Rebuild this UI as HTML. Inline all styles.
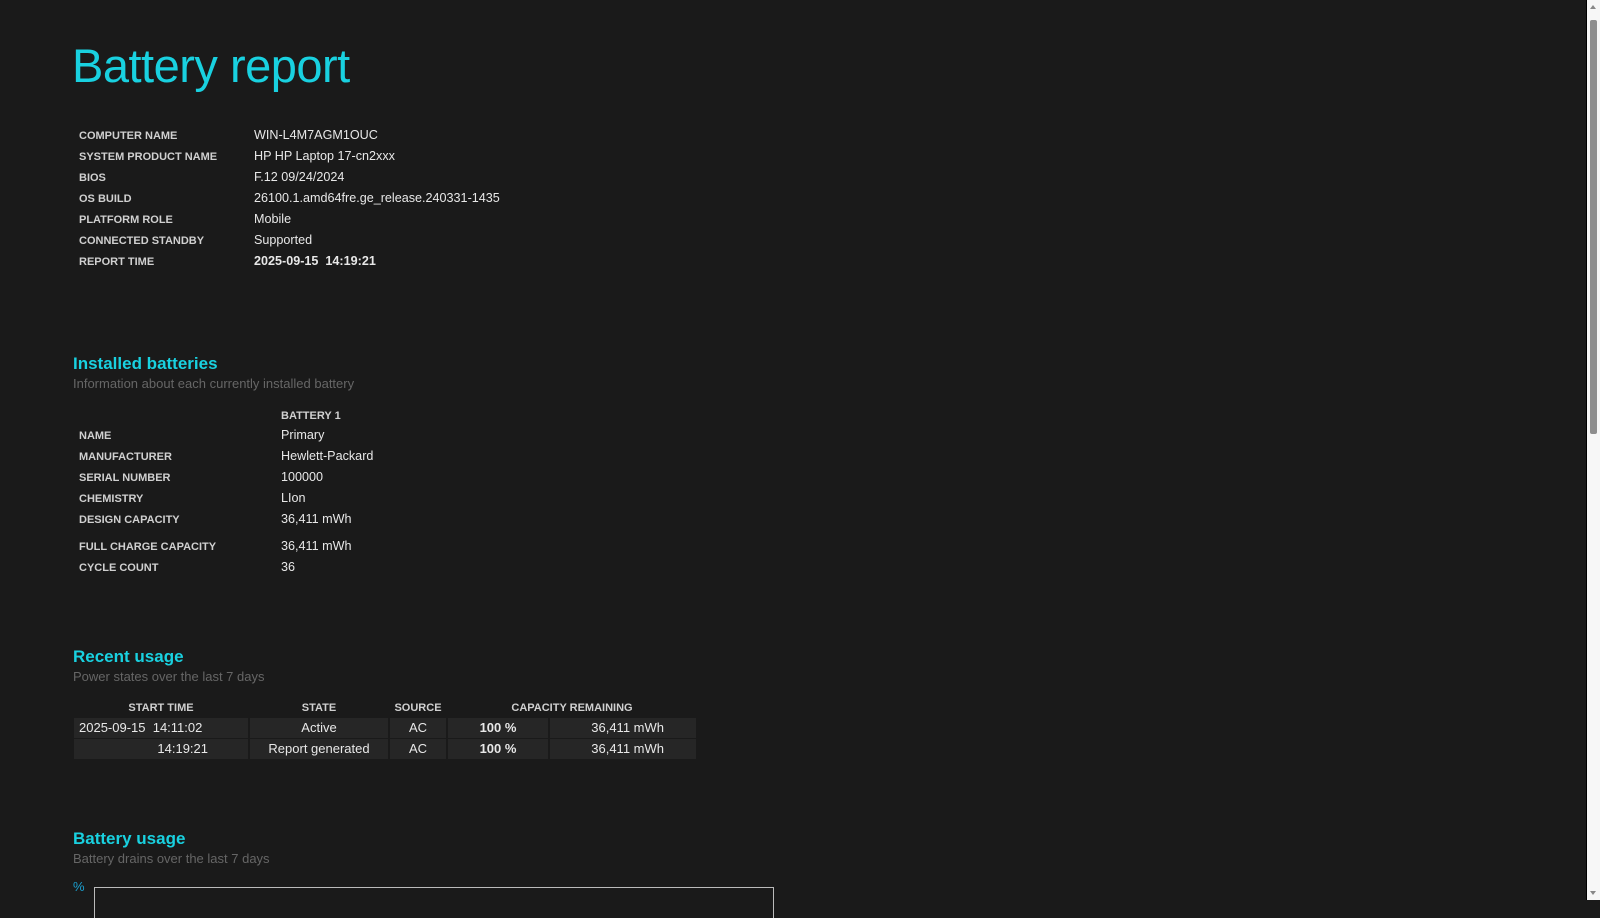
<!DOCTYPE html>
<html><head><meta charset="utf-8"><style>
html,body{margin:0;padding:0;background:#1a1a1a;width:1600px;height:900px;overflow:hidden;font-family:"Liberation Sans",sans-serif;color:#e6e6e6}
.a{position:absolute;white-space:nowrap}
h1{position:absolute;left:72px;top:38px;margin:0;font-weight:normal;font-size:47px;color:#19d1e0;letter-spacing:-0.5px}
.l{position:absolute;left:79px;font-size:11px;font-weight:bold;color:#d0d0d0}
.v{position:absolute;font-size:12.6px;color:#e8e8e8}
.h2{position:absolute;left:73px;font-size:17px;font-weight:bold;color:#19d1e0}
.s{position:absolute;left:73px;font-size:13px;color:#666}
.c{position:absolute;height:20px;background:#262626;font-size:13px;line-height:20px;text-align:center;color:#e8e8e8}
.th{position:absolute;font-size:11px;font-weight:bold;color:#d0d0d0;text-align:center}
</style></head><body>
<h1>Battery report</h1>
<div class="l" style="top:130px">COMPUTER NAME</div><div class="v" style="left:254px;top:128px">WIN-L4M7AGM1OUC</div>
<div class="l" style="top:151px">SYSTEM PRODUCT NAME</div><div class="v" style="left:254px;top:149px">HP HP Laptop 17-cn2xxx</div>
<div class="l" style="top:172px">BIOS</div><div class="v" style="left:254px;top:170px">F.12 09/24/2024</div>
<div class="l" style="top:193px">OS BUILD</div><div class="v" style="left:254px;top:191px">26100.1.amd64fre.ge_release.240331-1435</div>
<div class="l" style="top:214px">PLATFORM ROLE</div><div class="v" style="left:254px;top:212px">Mobile</div>
<div class="l" style="top:235px">CONNECTED STANDBY</div><div class="v" style="left:254px;top:233px">Supported</div>
<div class="l" style="top:256px">REPORT TIME</div><div class="v" style="left:254px;top:254px;font-weight:bold">2025-09-15&nbsp; 14:19:21</div>

<div class="h2" style="top:354px">Installed batteries</div>
<div class="s" style="top:376px">Information about each currently installed battery</div>
<div class="l" style="left:281px;top:410px">BATTERY 1</div>
<div class="l" style="top:430px">NAME</div><div class="v" style="left:281px;top:428px">Primary</div>
<div class="l" style="top:451px">MANUFACTURER</div><div class="v" style="left:281px;top:449px">Hewlett-Packard</div>
<div class="l" style="top:472px">SERIAL NUMBER</div><div class="v" style="left:281px;top:470px">100000</div>
<div class="l" style="top:493px">CHEMISTRY</div><div class="v" style="left:281px;top:491px">LIon</div>
<div class="l" style="top:514px">DESIGN CAPACITY</div><div class="v" style="left:281px;top:512px">36,411 mWh</div>
<div class="l" style="top:541px">FULL CHARGE CAPACITY</div><div class="v" style="left:281px;top:539px">36,411 mWh</div>
<div class="l" style="top:562px">CYCLE COUNT</div><div class="v" style="left:281px;top:560px">36</div>

<div class="h2" style="top:647px">Recent usage</div>
<div class="s" style="top:669px">Power states over the last 7 days</div>
<div class="th" style="left:74px;width:174px;top:702px">START TIME</div>
<div class="th" style="left:250px;width:138px;top:702px">STATE</div>
<div class="th" style="left:390px;width:56px;top:702px">SOURCE</div>
<div class="th" style="left:448px;width:248px;top:702px">CAPACITY REMAINING</div>
<div class="c" style="left:74px;width:174px;top:718px;text-align:left;padding-left:5px;box-sizing:border-box">2025-09-15&nbsp; 14:11:02</div>
<div class="c" style="left:250px;width:138px;top:718px">Active</div>
<div class="c" style="left:390px;width:56px;top:718px">AC</div>
<div class="c" style="left:448px;width:100px;top:718px;font-weight:bold">100 %</div>
<div class="c" style="left:550px;width:146px;top:718px;text-align:right;padding-right:32px;box-sizing:border-box">36,411 mWh</div>
<div class="c" style="left:74px;width:174px;top:739px;text-align:right;padding-right:40px;box-sizing:border-box">14:19:21</div>
<div class="c" style="left:250px;width:138px;top:739px">Report generated</div>
<div class="c" style="left:390px;width:56px;top:739px">AC</div>
<div class="c" style="left:448px;width:100px;top:739px;font-weight:bold">100 %</div>
<div class="c" style="left:550px;width:146px;top:739px;text-align:right;padding-right:32px;box-sizing:border-box">36,411 mWh</div>

<div class="h2" style="top:829px">Battery usage</div>
<div class="s" style="top:851px">Battery drains over the last 7 days</div>
<div class="a" style="left:73px;top:879px;font-size:13px;color:#1aa0d0">%</div>
<div class="a" style="left:94px;top:887px;width:678px;height:30px;border:1px solid #bbb;border-bottom:none"></div>

<div class="a" style="left:1586px;top:0;width:1px;height:900px;background:#000"></div>
<div class="a" style="left:1587px;top:0;width:13px;height:900px;background:#f7f7f7"></div>
<div class="a" style="left:1590px;top:20px;width:7px;height:414px;background:#8e8e8e;border-radius:2px"></div>
<div class="a" style="left:1590px;top:5px;width:0;height:0;border-left:3.5px solid transparent;border-right:3.5px solid transparent;border-bottom:4px solid #888"></div>
<div class="a" style="left:1590px;top:891px;width:0;height:0;border-left:3.5px solid transparent;border-right:3.5px solid transparent;border-top:4px solid #888"></div>
</body></html>
